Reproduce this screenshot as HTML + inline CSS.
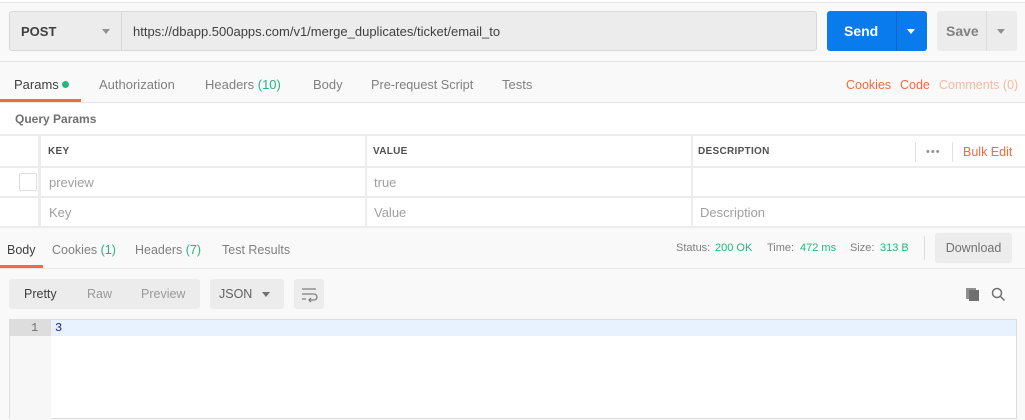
<!DOCTYPE html>
<html><head><style>
*{box-sizing:border-box;margin:0;padding:0}
body{width:1025px;height:404px;overflow:hidden;background:#f9f9f9;font-family:"Liberation Sans",sans-serif;font-size:13px;color:#505050;position:relative}
.a{position:absolute}
.tab{position:absolute;top:77px;font-size:13px;color:#808080}
.g{color:#26b47f}
.or{color:#f26b3a}
.th{position:absolute;top:146px;font-size:10px;font-weight:bold;color:#505050;letter-spacing:.3px}
.cell{position:absolute;font-size:13px;color:#a0a0a0}
.st{position:absolute;top:242px;font-size:11px;color:#808080}
</style></head><body>
<div class="a" style="left:0;top:0;width:1025px;height:3px;border-bottom:1px solid #e6e6e6;background:#fff"></div>
<div class="a" style="left:9px;top:11px;width:808px;height:40px;background:#ececec;border:1px solid #d6d6d6;border-radius:3px"></div>
<div class="a" style="left:121px;top:12px;width:1px;height:38px;background:#d6d6d6"></div>
<div class="a" style="left:21px;top:24px;font-weight:bold;color:#404040;font-size:13px">POST</div>
<div class="a" style="left:102px;top:29px;border:4px solid transparent;border-top:5px solid #909090"></div>
<div class="a" style="left:133px;top:24px;color:#404040;font-size:13px">https://dbapp.500apps.com/v1/merge_duplicates/ticket/email_to</div>
<div class="a" style="left:827px;top:11px;width:100px;height:40px;background:#097bed;border-radius:3px"></div>
<div class="a" style="left:896px;top:11px;width:1px;height:40px;background:#0868c8"></div>
<div class="a" style="left:844px;top:23px;color:#fff;font-weight:bold;font-size:14px">Send</div>
<div class="a" style="left:907px;top:29px;border:4px solid transparent;border-top:5px solid #fff"></div>
<div class="a" style="left:937px;top:11px;width:80px;height:40px;background:#ececec;border-radius:3px"></div>
<div class="a" style="left:986px;top:11px;width:1px;height:40px;background:#dcdcdc"></div>
<div class="a" style="left:946px;top:23px;color:#808080;font-weight:bold;font-size:14px">Save</div>
<div class="a" style="left:997px;top:29px;border:4px solid transparent;border-top:5px solid #909090"></div>
<div class="a" style="left:0;top:61px;width:1025px;height:1px;background:#e6e6e6"></div>
<div class="tab" style="left:14px;color:#404040">Params <span style="display:inline-block;width:7px;height:7px;border-radius:50%;background:#26b47f;vertical-align:1px"></span></div>
<div class="a" style="left:0;top:99px;width:81px;height:3px;background:#f26b3a"></div>
<div class="tab" style="left:99px">Authorization</div>
<div class="tab" style="left:205px">Headers <span class="g">(10)</span></div>
<div class="tab" style="left:313px">Body</div>
<div class="tab" style="left:371px;font-size:12.7px;top:78px">Pre-request Script</div>
<div class="tab" style="left:502px">Tests</div>
<div class="tab or" style="left:846px;font-size:12.5px;top:78px">Cookies</div>
<div class="tab or" style="left:900px;font-size:12.5px;top:78px">Code</div>
<div class="tab" style="left:939px;color:#f7b9a0;font-size:12.5px;top:78px">Comments (0)</div>
<div class="a" style="left:0;top:102px;width:1025px;height:1px;background:#e6e6e6"></div>
<div class="a" style="left:0;top:103px;width:1025px;height:125px;background:#fff"></div>
<div class="a" style="left:15px;top:112px;font-weight:bold;color:#707070;font-size:12px">Query Params</div>
<div class="a" style="left:0;top:134px;width:1025px;height:2px;background:#ececec"></div>
<div class="a" style="left:0;top:166px;width:1025px;height:2px;background:#ececec"></div>
<div class="a" style="left:0;top:196px;width:1025px;height:2px;background:#ececec"></div>
<div class="a" style="left:0;top:226px;width:1025px;height:2px;background:#ececec"></div>
<div class="a" style="left:38px;top:134px;width:3px;height:94px;background:#ececec"></div>
<div class="a" style="left:365px;top:134px;width:2px;height:94px;background:#ececec"></div>
<div class="a" style="left:691px;top:134px;width:2px;height:94px;background:#ececec"></div>
<div class="a" style="left:915px;top:142px;width:1px;height:20px;background:#e0e0e0"></div>
<div class="a" style="left:952px;top:142px;width:1px;height:20px;background:#e0e0e0"></div>
<div class="th" style="left:48px">KEY</div>
<div class="th" style="left:373px">VALUE</div>
<div class="th" style="left:698px">DESCRIPTION</div>
<div class="a" style="left:926px;top:146px;color:#909090;font-size:11px;letter-spacing:1px">•••</div>
<div class="a or" style="left:963px;top:145px;font-size:12.5px">Bulk Edit</div>
<div class="a" style="left:19px;top:173px;width:18px;height:18px;border:1px solid #ddd;border-radius:2px;background:#fff"></div>
<div class="cell" style="left:49px;top:175px">preview</div>
<div class="cell" style="left:374px;top:175px">true</div>
<div class="cell" style="left:49px;top:205px">Key</div>
<div class="cell" style="left:374px;top:205px">Value</div>
<div class="cell" style="left:700px;top:205px">Description</div>
<div class="a" style="left:7px;top:243px;color:#404040;font-size:12.5px">Body</div>
<div class="a" style="left:0;top:265px;width:43px;height:3px;background:#f26b3a"></div>
<div class="a" style="left:52px;top:243px;color:#808080;font-size:12.5px">Cookies <span class="g">(1)</span></div>
<div class="a" style="left:135px;top:243px;color:#808080;font-size:12.5px">Headers <span class="g">(7)</span></div>
<div class="a" style="left:222px;top:243px;color:#808080;font-size:12.5px">Test Results</div>
<div class="st" style="left:676px">Status:</div><div class="st" style="left:715px;color:#26b47f">200 OK</div>
<div class="st" style="left:767px">Time:</div><div class="st" style="left:800px;color:#26b47f">472 ms</div>
<div class="st" style="left:850px">Size:</div><div class="st" style="left:880px;color:#26b47f">313 B</div>
<div class="a" style="left:924px;top:236px;width:1px;height:24px;background:#ddd"></div>
<div class="a" style="left:935px;top:233px;width:77px;height:30px;background:#ececec;border-radius:3px;color:#707070;text-align:center;line-height:30px;font-size:12.5px">Download</div>
<div class="a" style="left:0;top:268px;width:1025px;height:1px;background:#e6e6e6"></div>
<div class="a" style="left:9px;top:279px;width:191px;height:30px;background:#ececec;border-radius:3px"></div>
<div class="a" style="left:24px;top:287px;color:#404040;font-size:12.5px">Pretty</div>
<div class="a" style="left:87px;top:287px;color:#999;font-size:12.5px">Raw</div>
<div class="a" style="left:141px;top:287px;color:#999;font-size:12.5px">Preview</div>
<div class="a" style="left:210px;top:279px;width:74px;height:30px;background:#ececec;border-radius:3px"></div>
<div class="a" style="left:219px;top:287px;color:#606060;font-size:12.5px">JSON</div>
<div class="a" style="left:262px;top:292px;border:4px solid transparent;border-top:5px solid #707070"></div>
<div class="a" style="left:294px;top:279px;width:30px;height:30px;background:#ececec;border-radius:3px"></div>
<svg class="a" style="left:300px;top:285px" width="18" height="18" viewBox="0 0 18 18" fill="none" stroke="#808080" stroke-width="1.3"><path d="M2 4h14M2 9h12a3 3 0 0 1 0 6H9M11 13l-2 2 2 2M2 14h4"/></svg>
<svg class="a" style="left:965px;top:287px" width="15" height="15" viewBox="0 0 15 15"><rect x="1" y="1" width="10" height="11" fill="#909090"/><rect x="4" y="3" width="10" height="11" fill="#707070"/></svg>
<svg class="a" style="left:991px;top:287px" width="15" height="15" viewBox="0 0 15 15" fill="none" stroke="#707070" stroke-width="1.5"><circle cx="6" cy="6" r="4.5"/><path d="M9.5 9.5l4 4"/></svg>
<div class="a" style="left:9px;top:319px;width:1008px;height:100px;background:#fff;border:1px solid #ddd"></div>
<div class="a" style="left:10px;top:320px;width:41px;height:100px;background:#f7f7f7"></div>
<div class="a" style="left:10px;top:320px;width:41px;height:16px;background:#ddd"></div>
<div class="a" style="left:51px;top:320px;width:965px;height:16px;background:#e8f2ff"></div>
<div class="a" style="left:31px;top:321px;font-family:'Liberation Mono',monospace;font-size:12px;color:#707070">1</div>
<div class="a" style="left:55px;top:321px;font-family:'Liberation Mono',monospace;font-size:12px"><span style="color:#1a1aa6">3</span></div>
</body></html>
